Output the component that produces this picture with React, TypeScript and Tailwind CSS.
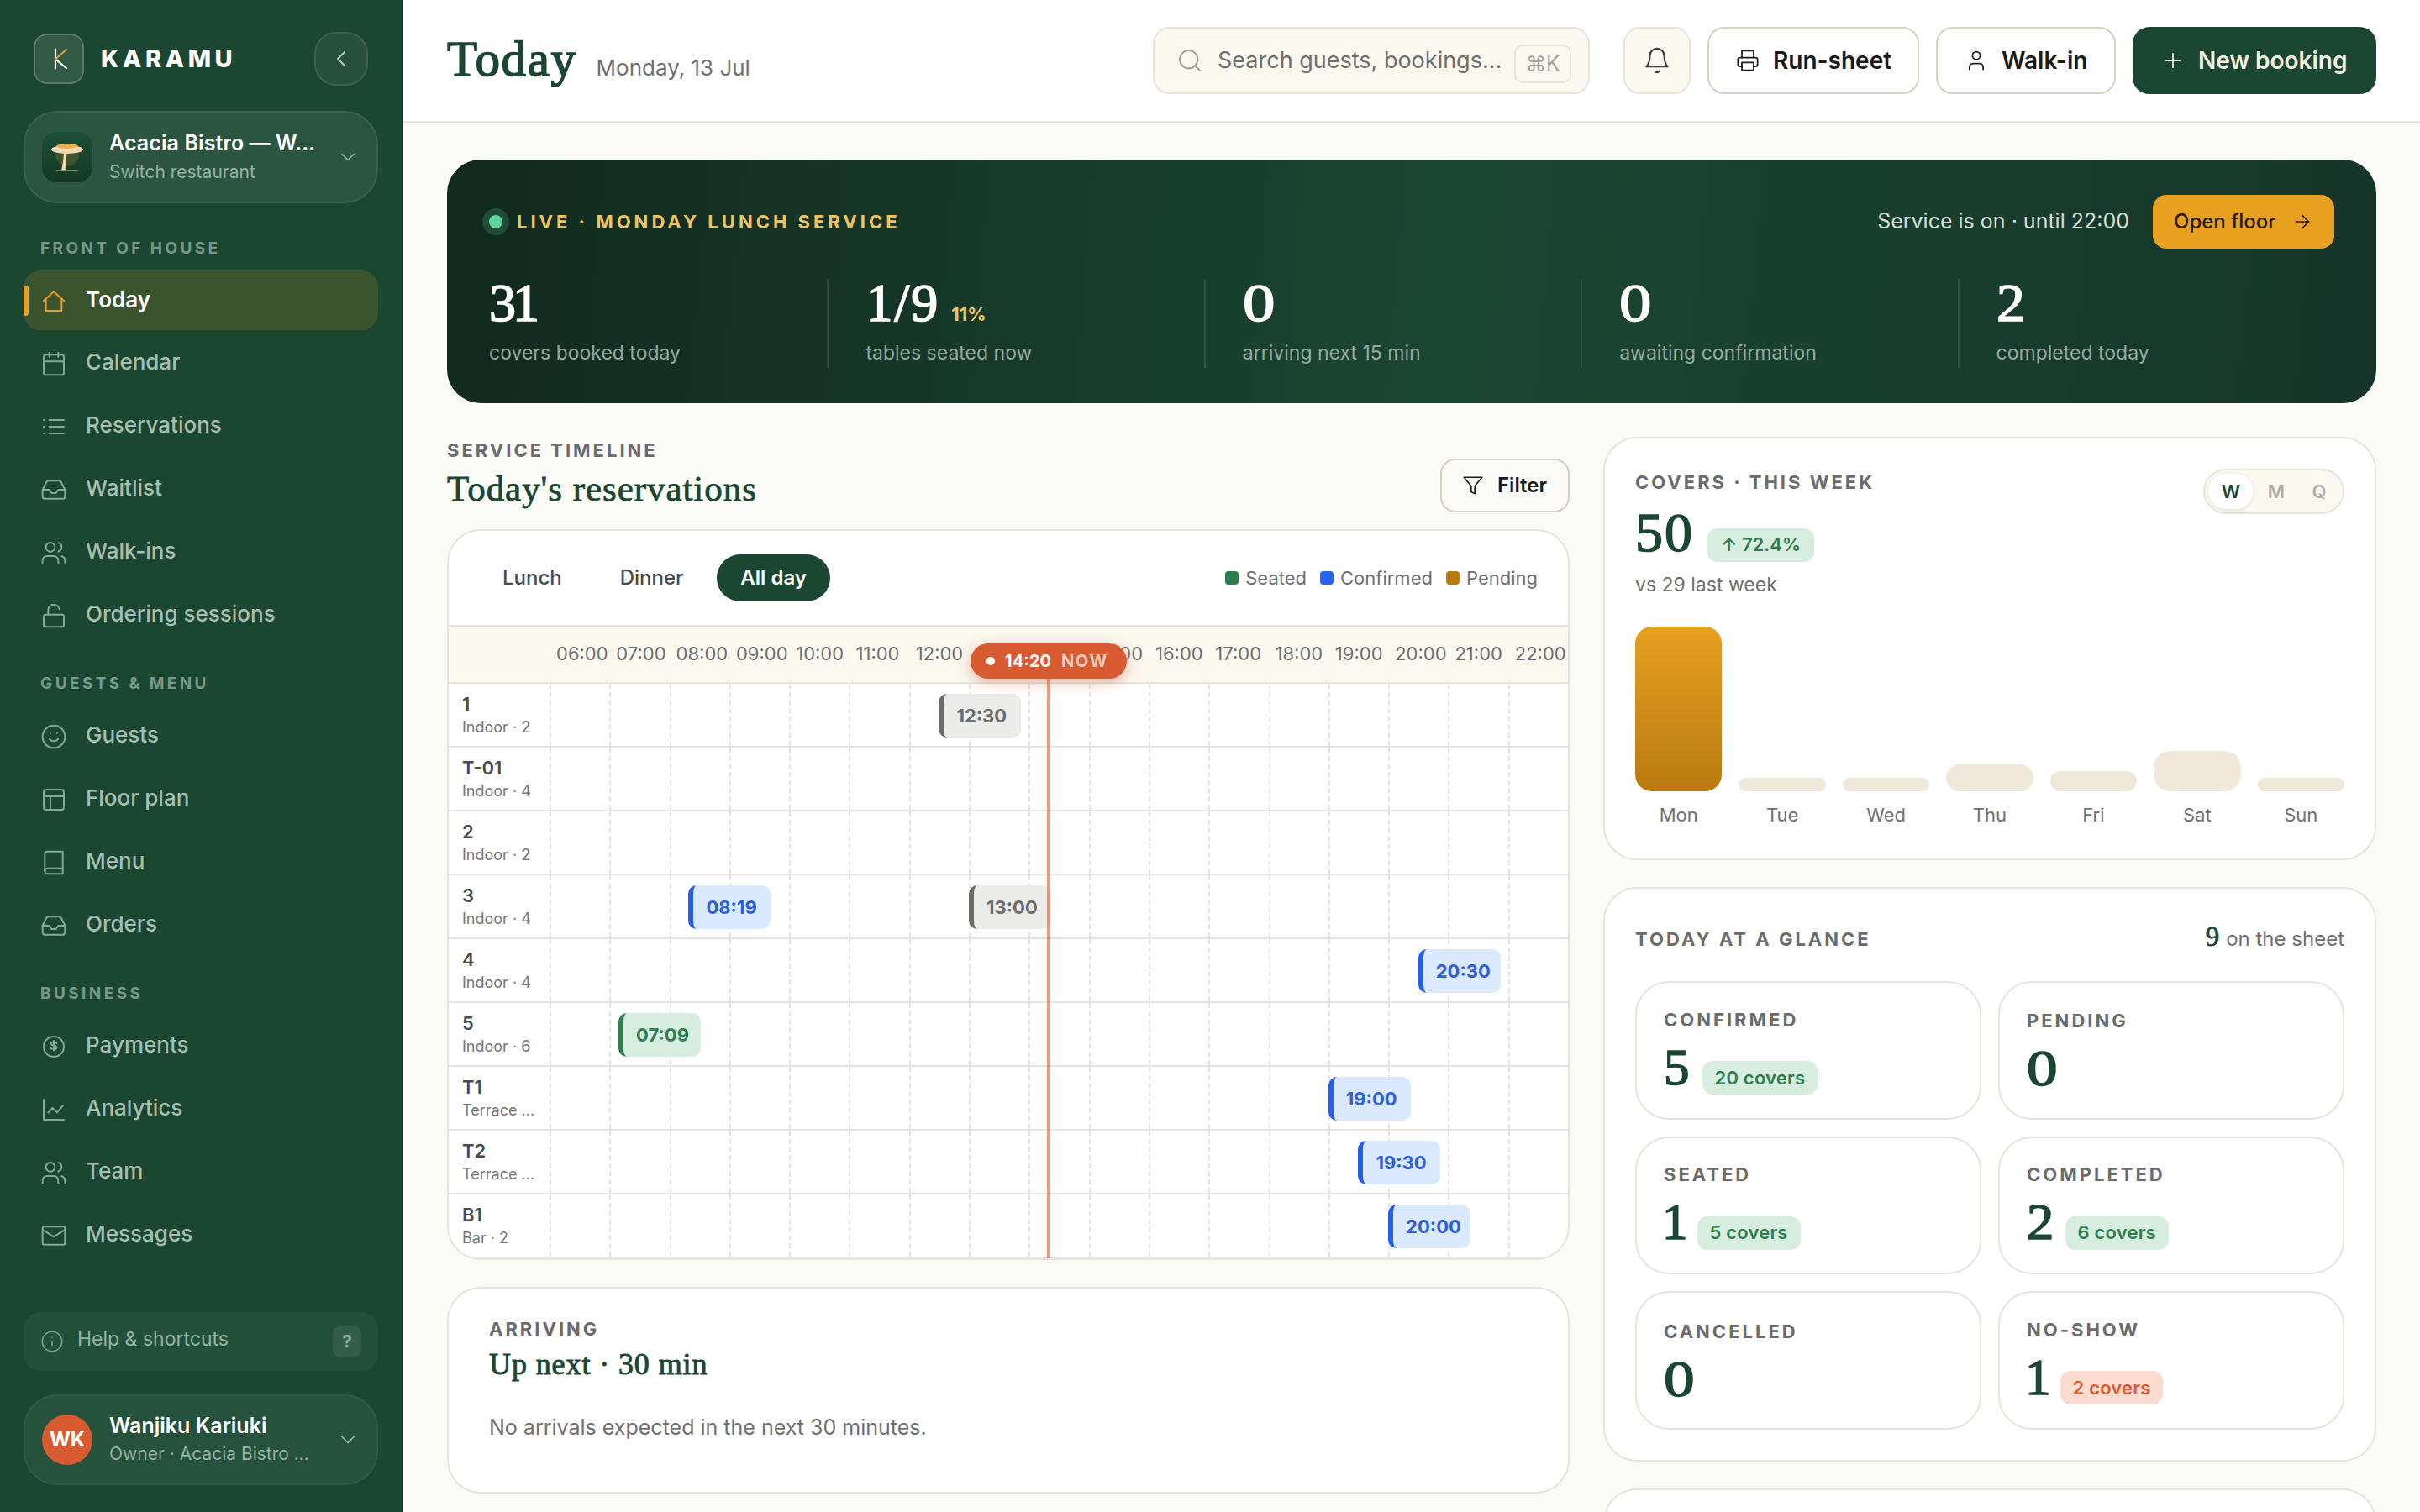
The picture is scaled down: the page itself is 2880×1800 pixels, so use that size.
import type { ReactNode } from "react";
import {
  ArrowRight,
  Calendar,
  ChevronDown,
  ChevronLeft,
  Inbox,
  PanelsTopLeft,
  Plus,
  Search,
  Smile,
  User,
  Info,
} from "lucide-react";

type IconProps = { size: number; children: ReactNode };

function Icon({ size, children }: IconProps) {
  return (
    <svg
      width={size}
      height={size}
      viewBox="0 0 24 24"
      fill="none"
      stroke="currentColor"
      strokeWidth={1.5}
      strokeLinecap="round"
      strokeLinejoin="round"
      className="shrink-0"
    >
      {children}
    </svg>
  );
}

const HomeIcon = () => (
  <Icon size={32}>
    <path d="M3 12l9-8 9 8" />
    <path d="M5 10.5V21h14V10.5" />
  </Icon>
);

const ListIcon = () => (
  <Icon size={32}>
    <path d="M8 6h13M8 12h13M8 18h13M3 6h.01M3 12h.01M3 18h.01" />
  </Icon>
);

const UsersIcon = () => (
  <Icon size={32}>
    <path d="M16 21v-2a4 4 0 0 0-4-4H6a4 4 0 0 0-4 4v2" />
    <circle cx="9" cy="7" r="4" />
    <path d="M22 21v-2a4 4 0 0 0-3-3.87M16 3.13a4 4 0 0 1 0 7.75" />
  </Icon>
);

const UnlockIcon = () => (
  <Icon size={32}>
    <rect x="3" y="11" width="18" height="11" rx="1.5" />
    <path d="M7 11V7a5 5 0 0 1 9.9-1" />
  </Icon>
);

const BookIcon = () => (
  <Icon size={32}>
    <path d="M4 19.5V4a2 2 0 0 1 2-2h14v20H6.5A2.5 2.5 0 0 1 4 19.5z" />
    <path d="M4 19.5A2.5 2.5 0 0 1 6.5 17H20" />
  </Icon>
);

const CoinIcon = () => (
  <Icon size={32}>
    <circle cx="12" cy="12" r="9" />
    <path d="M14.6 9c-.4-.8-1.3-1.2-2.6-1.2-1.5 0-2.5.6-2.5 1.6 0 2.2 5.2 1 5.2 3.2 0 1-1.1 1.7-2.7 1.7-1.3 0-2.3-.5-2.7-1.3M12 6.8v8.6" />
  </Icon>
);

const ChartIcon = () => (
  <Icon size={32}>
    <path d="M3 3v18h18" />
    <path d="M7 14.5l4-4 4 4 5-6" />
  </Icon>
);

const MailIcon = () => (
  <Icon size={32}>
    <rect x="2" y="4" width="20" height="16" rx="1.5" />
    <path d="M2.5 7L12 13l9.5-6" />
  </Icon>
);

const BellIcon = () => (
  <Icon size={34}>
    <path d="M18 8A6 6 0 0 0 6 8c0 7-3 9-3 9h18s-3-2-3-9" />
    <path d="M13.73 21a2 2 0 0 1-3.46 0" />
  </Icon>
);

const PrinterIcon = () => (
  <Icon size={28}>
    <path d="M6 9V2h12v7" />
    <path d="M6 18H4a2 2 0 0 1-2-2v-5a2 2 0 0 1 2-2h16a2 2 0 0 1 2 2v5a2 2 0 0 1-2 2h-2" />
    <rect x="6" y="14" width="12" height="8" />
  </Icon>
);

const FilterIcon = () => (
  <Icon size={26}>
    <path d="M22 3H2l8 9.46V19l4 2v-8.54L22 3z" />
  </Icon>
);

const navGroups = [
  {
    title: "FRONT OF HOUSE",
    items: [
      { label: "Today", icon: <HomeIcon />, active: true },
      { label: "Calendar", icon: <Calendar size={32} strokeWidth={1.5} /> },
      { label: "Reservations", icon: <ListIcon /> },
      { label: "Waitlist", icon: <Inbox size={32} strokeWidth={1.5} /> },
      { label: "Walk-ins", icon: <UsersIcon /> },
      { label: "Ordering sessions", icon: <UnlockIcon /> },
    ],
  },
  {
    title: "GUESTS & MENU",
    items: [
      { label: "Guests", icon: <Smile size={32} strokeWidth={1.5} /> },
      { label: "Floor plan", icon: <PanelsTopLeft size={32} strokeWidth={1.5} /> },
      { label: "Menu", icon: <BookIcon /> },
      { label: "Orders", icon: <Inbox size={32} strokeWidth={1.5} /> },
    ],
  },
  {
    title: "BUSINESS",
    items: [
      { label: "Payments", icon: <CoinIcon /> },
      { label: "Analytics", icon: <ChartIcon /> },
      { label: "Team", icon: <UsersIcon /> },
      { label: "Messages", icon: <MailIcon /> },
    ],
  },
];

function NavItem({ label, icon, active }: { label: string; icon: ReactNode; active?: boolean }) {
  if (active) {
    return (
      <div className="relative flex h-[71px] items-center gap-[22px] rounded-[20px] bg-[#3b542d] pl-5 text-[#e8a020]">
        <span className="absolute top-[18px] left-0 h-9 w-1.5 rounded-[3px] bg-[#e8a020]" />
        {icon}
        <span className="pb-0.5 text-[26px] leading-[40px] font-semibold text-white">{label}</span>
      </div>
    );
  }
  return (
    <div className="flex h-[71px] items-center gap-[22px] pl-5 text-[#85a797]">
      {icon}
      <span className="pb-[3px] text-[26px] leading-[40px] font-medium text-[#a6bfb1]">{label}</span>
    </div>
  );
}

function Sidebar() {
  return (
    <aside className="flex h-full w-[480px] shrink-0 flex-col border-r-2 border-[#14382a] bg-[#1b4632] px-7 pt-[38px] pb-8">
      <div className="flex h-16 items-center px-3">
        <div className="flex size-[60px] items-center justify-center rounded-[16px] border-2 border-white/20 bg-white/10">
          <svg width="28" height="28" viewBox="0 0 28 28" fill="none" strokeWidth="2.2" strokeLinecap="round">
            <path d="M10 2.5v23" stroke="#fff" />
            <path d="M10 14.5l13 10.5" stroke="#fff" />
            <path d="M10 14.5l13-11.5" stroke="#e0a02c" />
          </svg>
        </div>
        <span className="ml-5 text-[29px] font-extrabold tracking-[4.6px] text-white">KARAMU</span>
        <div className="ml-auto flex size-16 items-center justify-center rounded-[26px] border-2 border-white/10 bg-white/5 text-[#b5cabf]">
          <ChevronLeft size={32} strokeWidth={1.5} />
        </div>
      </div>

      <div className="mt-[30px] flex h-[110px] items-center rounded-[40px] border-2 border-[#39624e] bg-[#2b5541] px-5">
        <svg width="60" height="60" viewBox="0 0 60 60" className="shrink-0">
          <defs>
            <linearGradient id="tile" x1="0" y1="0" x2="0" y2="1">
              <stop offset="0" stopColor="#1c4f37" />
              <stop offset="1" stopColor="#153726" />
            </linearGradient>
          </defs>
          <rect width="60" height="60" rx="17" fill="url(#tile)" />
          <circle cx="30" cy="27" r="14" fill="#3c552d" />
          <path d="M26 24h4q-2 8-.8 21.5h-6Q25.5 36 26 24z" fill="#eed9b4" />
          <ellipse cx="30" cy="21" rx="19" ry="5" fill="#eed9b4" />
          <ellipse cx="30" cy="17" rx="13" ry="3" fill="#edb04f" />
          <path d="M16.5 46h27" stroke="#8a9f7e" strokeWidth="1.6" />
        </svg>
        <div className="ml-5 w-[250px] whitespace-nowrap">
          <div className="text-[25px] leading-[36px] font-semibold tracking-[0.1px] text-white">Acacia Bistro — W…</div>
          <div className="text-[21px] leading-[34px] text-[#95b1a2]">Switch restaurant</div>
        </div>
        <ChevronDown size={28} strokeWidth={1.5} className="ml-auto shrink-0 text-[#9ab5a7]" />
      </div>

      {navGroups.map((group, i) => (
        <div key={group.title} className={i === 0 ? "mt-[38px]" : "mt-[30px]"}>
          <div className="pt-px pl-5 text-[19px] leading-[30px] font-bold tracking-[3.4px] text-[#76998a]">
            {group.title}
          </div>
          <nav className={i === 0 ? "mt-[11px] flex flex-col gap-1" : "mt-3 flex flex-col gap-1"}>
            {group.items.map((item) => (
              <NavItem key={item.label} {...item} />
            ))}
          </nav>
        </div>
      ))}

      <div className="mt-auto flex h-[70px] shrink-0 items-center rounded-[20px] bg-[#23503b] pr-5 pl-5 text-[#95b1a2]">
        <Info size={28} strokeWidth={1.3} className="text-[#7fa291]" />
        <span className="ml-4 pb-[5px] text-[23px]">Help & shortcuts</span>
        <span className="ml-auto flex h-[38px] w-[34px] items-center justify-center rounded-[10px] bg-[#335c49] text-[20px] font-bold">
          ?
        </span>
      </div>

      <div className="mt-7 flex h-[108px] shrink-0 items-center rounded-[40px] border-2 border-[#31594a] bg-[#26523d] px-5">
        <div className="flex size-[60px] items-center justify-center rounded-full bg-[#d85a30] text-[24px] font-bold text-white">
          WK
        </div>
        <div className="ml-5 w-[250px] whitespace-nowrap">
          <div className="text-[25px] leading-[34px] font-semibold text-white">Wanjiku Kariuki</div>
          <div className="text-[21px] leading-[34px] text-[#95b1a2]">Owner · Acacia Bistro …</div>
        </div>
        <ChevronDown size={28} strokeWidth={1.5} className="ml-auto shrink-0 text-[#9ab5a7]" />
      </div>
    </aside>
  );
}

function Header() {
  return (
    <header className="flex h-[146px] shrink-0 items-center border-b-2 border-[#e8e4da] bg-white pr-[52px] pl-[52px]">
      <div className="flex items-baseline pb-1">
        <h1 className="font-['Liberation_Serif',serif] text-[59px] leading-[74px] tracking-[1.6px] text-[#1b4632] [-webkit-text-stroke:1.5px_#1b4632]">
          Today
        </h1>
        <span className="ml-[23px] text-[26px] text-[#6f6f6f]">Monday, 13 Jul</span>
      </div>
      <div className="ml-auto flex h-20 w-[520px] items-center rounded-[20px] border-2 border-[#e8e4da] bg-[#fbf8f0] pr-5 pl-[26px]">
        <Search size={32} strokeWidth={1.5} className="text-[#a3a09a]" />
        <span className="ml-[17px] text-[27px] text-[#6f6f6f]">Search guests, bookings…</span>
        <span className="mt-2 ml-auto flex h-[46px] w-[68px] items-center justify-center rounded-[10px] border-2 border-[#e8e4da] text-[24px] text-[#a3a09a]">
          ⌘K
        </span>
      </div>
      <div className="ml-10 flex size-20 items-center justify-center rounded-[20px] border-2 border-[#e8e4da] bg-[#fbf8f0] text-[#3d3d3d]">
        <BellIcon />
      </div>
      <button className="ml-5 flex h-20 w-[252px] items-center gap-4 rounded-[20px] border-2 border-[#d6d1c4] pl-8 text-[28px] font-semibold text-[#1a1a1a]">
        <PrinterIcon />
        Run-sheet
      </button>
      <button className="ml-5 flex h-20 w-[214px] items-center gap-4 rounded-[20px] border-2 border-[#d6d1c4] pl-8 text-[28px] font-semibold text-[#1a1a1a]">
        <User size={28} strokeWidth={1.5} />
        Walk-in
      </button>
      <button className="ml-5 flex h-20 w-[290px] items-center gap-4 rounded-[20px] bg-[#1b4632] pl-[34px] text-[28px] font-semibold text-[#f5efe0]">
        <Plus size={28} strokeWidth={1.5} />
        New booking
      </button>
    </header>
  );
}

const stats = [
  { value: "31", label: "covers booked today" },
  { value: "1/9", label: "tables seated now", note: "11%" },
  { value: "0", label: "arriving next 15 min" },
  { value: "0", label: "awaiting confirmation" },
  { value: "2", label: "completed today" },
];

// per-value width tuning, so figures made of narrow and wide digits sit evenly
const figureFit: Record<string, string> = {
  "0": "scale-x-[1.2]",
  "1": "-ml-0.5 tracking-[-4px]",
  "2": "scale-x-[1.06]",
  "31": "tracking-[-4px]",
  "1/9": "tracking-[2px]",
};

function Figure({ value, light }: { value: string; light?: boolean }) {
  return (
    <span
      className={`inline-block origin-left font-['Liberation_Serif',serif] leading-[58px] ${
        light
          ? "text-[64px] text-white [-webkit-text-stroke:1.6px_#fff]"
          : "text-[61px] text-[#1b4632] [-webkit-text-stroke:1.6px_#1b4632]"
      } ${figureFit[value] ?? ""}`}
    >
      {value}
    </span>
  );
}

function LiveBanner() {
  return (
    <section className="h-[290px] rounded-[40px] bg-[linear-gradient(95deg,#11291f_0%,#1b4632_52%,#16352a_100%)] px-[50px] pt-[42px]">
      <div className="flex h-16 items-center">
        <span className="size-4 rounded-full bg-[#5fd39a] shadow-[0_0_0_8px_rgba(95,211,154,0.2)]" />
        <span className="ml-[17px] text-[22px] font-bold tracking-[4px] text-[#f0c560]">
          LIVE · MONDAY LUNCH SERVICE
        </span>
        <span className="ml-auto text-[25px] text-[#d3dfd8]">Service is on · until 22:00</span>
        <button className="ml-7 flex h-16 w-[216px] items-center justify-between rounded-[16px] bg-[#e8a020] px-[25px] text-[24px] font-medium text-[#2a1a06]">
          Open floor
          <ArrowRight size={26} strokeWidth={1.5} />
        </button>
      </div>
      <div className="mt-9 grid grid-cols-5 gap-[46px]">
        {stats.map((s, i) => (
          <div key={s.label} className={i < 4 ? "-mr-0.5 h-[106px] border-r-2 border-white/10" : "h-[106px]"}>
            <div className="flex h-[58px] items-baseline">
              <Figure value={s.value} light />
              {s.note && <span className="ml-3.5 text-[22px] leading-none font-bold text-[#f0c560]">{s.note}</span>}
            </div>
            <div className="mt-[11px] text-[23px] leading-[38px] text-[#93aa9f]">{s.label}</div>
          </div>
        ))}
      </div>
    </section>
  );
}

const hours = [
  "06:00", "07:00", "08:00", "09:00", "10:00", "11:00", "12:00", "13:00", "14:00",
  "15:00", "16:00", "17:00", "18:00", "19:00", "20:00", "21:00", "22:00",
];

type Booking = { time: string; at: number; status: "seated" | "confirmed" | "done" };

const tables: { name: string; area: string; bookings: Booking[] }[] = [
  { name: "1", area: "Indoor · 2", bookings: [{ time: "12:30", at: 12.5, status: "done" }] },
  { name: "T-01", area: "Indoor · 4", bookings: [] },
  { name: "2", area: "Indoor · 2", bookings: [] },
  {
    name: "3",
    area: "Indoor · 4",
    bookings: [
      { time: "08:19", at: 8.32, status: "confirmed" },
      { time: "13:00", at: 13, status: "done" },
    ],
  },
  { name: "4", area: "Indoor · 4", bookings: [{ time: "20:30", at: 20.5, status: "confirmed" }] },
  { name: "5", area: "Indoor · 6", bookings: [{ time: "07:09", at: 7.15, status: "seated" }] },
  { name: "T1", area: "Terrace …", bookings: [{ time: "19:00", at: 19, status: "confirmed" }] },
  { name: "T2", area: "Terrace …", bookings: [{ time: "19:30", at: 19.5, status: "confirmed" }] },
  { name: "B1", area: "Bar · 2", bookings: [{ time: "20:00", at: 20, status: "confirmed" }] },
];

const chipStyles = {
  seated: "border-[#2e7d4f] bg-[#d7ede0] text-[#2e7d4f]",
  confirmed: "border-[#2460e8] bg-[#dbe9fe] text-[#2b60d8]",
  done: "border-[#6b6b6b] bg-[#ebebea] text-[#6b6b6b]",
};

// offset of a time on the 06:00–23:00 axis, in percent
const axisPos = (t: number) => `${((t - 6) / 17) * 100}%`;

function BookingChip({ booking }: { booking: Booking }) {
  return (
    <div
      style={{ left: axisPos(booking.at) }}
      className={`absolute top-3 flex h-[52px] w-[98px] items-center rounded-[10px] border-l-[6px] pl-[15px] text-[22px] font-bold ${chipStyles[booking.status]}`}
    >
      {booking.time}
    </div>
  );
}

function Timeline() {
  return (
    <div className="relative h-[870px] overflow-hidden rounded-[40px] border-2 border-[#e6e4dc] bg-white">
      <div className="flex h-[114px] items-center border-b-2 border-[#e6e4dc] pr-9 pl-9 text-[24px]">
        <span className="flex h-14 items-center px-7 font-medium text-[#4a4a4a]">Lunch</span>
        <span className="ml-[13px] flex h-14 items-center px-7 font-medium text-[#4a4a4a]">Dinner</span>
        <span className="ml-3 flex h-14 items-center rounded-full bg-[#1b4632] px-7 font-semibold text-white">
          All day
        </span>
        <div className="ml-auto flex items-center text-[22px] text-[#6f6f6f]">
          <span className="mr-2 size-4 rounded-[4px] bg-[#2e7d4f]" />
          Seated
          <span className="mr-2 ml-4 size-4 rounded-[4px] bg-[#2563eb]" />
          Confirmed
          <span className="mr-2 ml-4 size-4 rounded-[4px] bg-[#b97a10]" />
          Pending
        </div>
      </div>

      <div className="flex h-[68px] border-b-2 border-[#e6e4dc] bg-[#fbf8f0] pl-[120px]">
        {hours.map((h) => (
          <span key={h} className="min-w-0 flex-1 pl-2 text-[22px] leading-[64px] whitespace-nowrap text-[#6f6f6f]">
            {h}
          </span>
        ))}
      </div>

      {tables.map((t) => (
        <div key={t.name} className="flex h-[76px] border-b-2 border-[#e6e4dc]">
          <div className="w-[120px] shrink-0 pt-[9px] pl-4">
            <div className="text-[22px] leading-[30px] font-semibold text-[#4a4a4a]">{t.name}</div>
            <div className="text-[18px] leading-[26px] text-[#777]">{t.area}</div>
          </div>
          <div className="relative flex flex-1">
            {hours.map((h) => (
              <div key={h} className="flex-1 border-l-2 border-dashed border-[#e6e4dc]" />
            ))}
            {t.bookings.map((b) => (
              <BookingChip key={b.time} booking={b} />
            ))}
          </div>
        </div>
      ))}

      <div className="pointer-events-none absolute inset-y-0 right-0 left-[120px]">
        <div
          style={{ left: axisPos(14.333) }}
          className="absolute top-[134px] bottom-0 flex -translate-x-1/2 flex-col items-center"
        >
          <div className="flex h-[42px] w-[186px] shrink-0 items-center rounded-full bg-[#d85a30] pl-[19px] text-[20px] font-bold text-white shadow-[0_4px_16px_rgba(216,90,48,0.45)]">
            <span className="size-2.5 rounded-full bg-white" />
            <span className="ml-3">14:20</span>
            <span className="ml-3 font-bold tracking-[1.6px] text-white/70">NOW</span>
          </div>
          <div className="w-1 flex-1 bg-[#d85a30]/60" />
        </div>
      </div>
    </div>
  );
}

function Eyebrow({ children }: { children: ReactNode }) {
  return (
    <div className="text-[22px] leading-[32px] font-bold tracking-[3px] text-[#6b6b6b]">{children}</div>
  );
}

function Reservations() {
  return (
    <div className="w-[1336px] shrink-0">
      <div className="flex h-[110px] items-end justify-between pb-5">
        <div>
          <Eyebrow>SERVICE TIMELINE</Eyebrow>
          <h2 className="mt-0.5 font-['Liberation_Serif',serif] text-[43px] leading-[56px] tracking-[0.95px] text-[#1b4632] [-webkit-text-stroke:0.8px_#1b4632]">
            Today's reservations
          </h2>
        </div>
        <button className="flex h-16 w-[154px] items-center gap-4 rounded-[18px] border-2 border-[#d6d1c4] pl-6 text-[24px] font-semibold text-[#1a1a1a]">
          <FilterIcon />
          Filter
        </button>
      </div>
      <Timeline />
      <div className="mt-8 h-[246px] rounded-[40px] border-2 border-[#e6e4dc] bg-white px-12 pt-8">
        <Eyebrow>ARRIVING</Eyebrow>
        <h3 className="mt-1 font-['Liberation_Serif',serif] text-[36px] leading-[44px] tracking-[0.9px] text-[#1b4632] [-webkit-text-stroke:0.9px_#1b4632]">
          Up next · 30 min
        </h3>
        <p className="mt-[33px] text-[25px] leading-[40px] text-[#6f6f6f]">
          No arrivals expected in the next 30 minutes.
        </p>
      </div>
    </div>
  );
}

const week = [
  { day: "Mon", height: 196, today: true },
  { day: "Tue", height: 16 },
  { day: "Wed", height: 16 },
  { day: "Thu", height: 32 },
  { day: "Fri", height: 24 },
  { day: "Sat", height: 48 },
  { day: "Sun", height: 16 },
];

function CoversCard() {
  return (
    <section className="h-[504px] rounded-[40px] border-2 border-[#e6e4dc] bg-white px-9 pt-9">
      <div className="flex items-start justify-between">
        <div>
          <Eyebrow>COVERS · THIS WEEK</Eyebrow>
          <div className="mt-3.5 flex items-baseline">
            <span className="font-['Liberation_Serif',serif] text-[66px] leading-[60px] tracking-[2px] text-[#1b4632] [-webkit-text-stroke:1.6px_#1b4632]">
              50
            </span>
            <span className="ml-4 flex h-10 items-center rounded-[12px] bg-[#d7ede0] px-4 text-[22px] font-semibold text-[#2e7d4f]">
              ↑ 72.4%
            </span>
          </div>
          <div className="mt-3 text-[23px] leading-[30px] text-[#6f6f6f]">vs 29 last week</div>
        </div>
        <div className="flex h-[54px] w-[168px] items-center rounded-full border-2 border-[#e8e4da] bg-[#fbf8f0] pl-1 text-[22px] font-semibold text-[#b0aea8]">
          <span className="flex h-[42px] w-[54px] items-center justify-center rounded-full bg-white text-[#1b4632] shadow-[0_1px_4px_rgba(0,0,0,0.12)]">
            W
          </span>
          <span className="w-[54px] text-center">M</span>
          <span className="w-12 text-center">Q</span>
        </div>
      </div>
      <div className="mt-[35px] flex h-[196px] items-end gap-5">
        {week.map((w) => (
          <div
            key={w.day}
            style={{ height: w.height, borderRadius: Math.min(20, w.height / 2) }}
            className={w.today ? "flex-1 bg-linear-to-b from-[#e8a020] to-[#b97a10]" : "flex-1 bg-[#f0e8d8]"}
          />
        ))}
      </div>
      <div className="mt-[13px] flex gap-5 text-[22px] leading-[30px] text-[#6f6f6f]">
        {week.map((w) => (
          <span key={w.day} className="flex-1 text-center">
            {w.day}
          </span>
        ))}
      </div>
    </section>
  );
}

const glance = [
  { label: "CONFIRMED", value: "5", covers: "20 covers" },
  { label: "PENDING", value: "0" },
  { label: "SEATED", value: "1", covers: "5 covers" },
  { label: "COMPLETED", value: "2", covers: "6 covers" },
  { label: "CANCELLED", value: "0" },
  { label: "NO-SHOW", value: "1", covers: "2 covers", alert: true },
];

function GlanceCard() {
  return (
    <section className="mt-8 flex h-[684px] flex-col rounded-[40px] border-2 border-[#e6e4dc] bg-white px-9 pt-9 pb-9">
      <div className="flex h-12 items-center justify-between">
        <Eyebrow>TODAY AT A GLANCE</Eyebrow>
        <span className="flex items-baseline pb-[5px] text-[24px] text-[#6f6f6f]">
          <span className="mr-2 font-['Liberation_Serif',serif] text-[33px] leading-[40px] text-[#1b4632] [-webkit-text-stroke:0.8px_#1b4632]">
            9
          </span>
          on the sheet
        </span>
      </div>
      <div className="mt-[26px] grid flex-1 grid-cols-2 grid-rows-3 gap-5">
        {glance.map((g) => (
          <div key={g.label} className="flex flex-col justify-center rounded-[40px] border-2 border-[#e6e4dc] pl-8">
            <Eyebrow>{g.label}</Eyebrow>
            <div className="mt-3 flex items-baseline">
              <Figure value={g.value} />
              {g.covers && (
                <span
                  className={`ml-[15px] flex h-10 items-center rounded-[12px] px-[15px] text-[22px] font-semibold tracking-[0.2px] ${
                    g.alert ? "bg-[#fadbd0] text-[#d85a30]" : "bg-[#d7ede0] text-[#2e7d4f]"
                  }`}
                >
                  {g.covers}
                </span>
              )}
            </div>
          </div>
        ))}
      </div>
    </section>
  );
}

export default function App() {
  return (
    <div className="flex h-[1800px] w-[2880px] overflow-hidden bg-[#fafaf7] font-['Inter',sans-serif]">
      <Sidebar />
      <div className="flex min-w-0 flex-1 flex-col">
        <Header />
        <main className="px-[52px] pt-11">
          <LiveBanner />
          <div className="mt-10 flex gap-10">
            <Reservations />
            <div className="min-w-0 flex-1">
              <CoversCard />
              <GlanceCard />
              <section className="mt-8 h-[200px] rounded-[40px] border-2 border-[#e6e4dc] bg-white" />
            </div>
          </div>
        </main>
      </div>
    </div>
  );
}
